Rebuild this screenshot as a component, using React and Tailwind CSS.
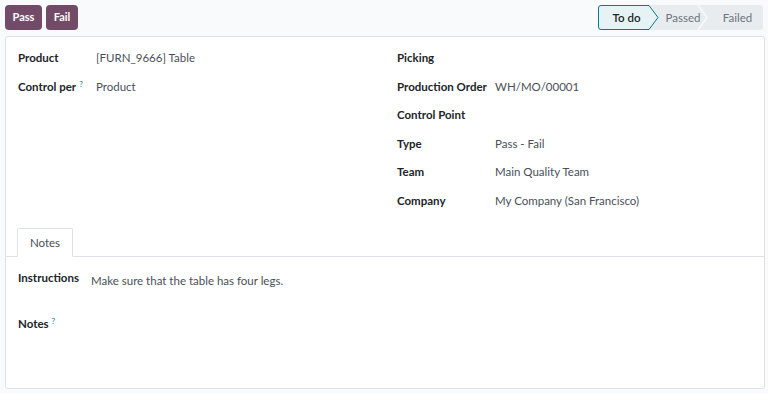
import React from "react";

// --- Quality check form ---

const Field = ({ label, help, value, labelWidth }) => (
  <div className="flex items-start h-[28.5px]">
    <div className={`${labelWidth} shrink-0 whitespace-nowrap font-bold text-[#212529]`}>
      {label}
      {help && <sup className="ml-[3px] text-[8px] font-normal text-[#017e84]">?</sup>}
    </div>
    <div className="text-[#495057]">{value}</div>
  </div>
);

const StatusBar = () => (
  <div className="relative w-[165px] h-[25px]">
    <svg className="absolute inset-0" width="165" height="25" viewBox="0 0 165 25">
      <rect x="0" y="0" width="165" height="25" rx="3" fill="#e9ecef" />
      <path d="M3 0.5 H51 L60 12.5 L51 24.5 H3 Q0.5 24.5 0.5 22 V3 Q0.5 0.5 3 0.5 Z" fill="#e6f2f3" stroke="#017e84" strokeWidth="1" />
      <path d="M100 0 L109 12.5 L100 25" fill="none" stroke="#f8f9fa" strokeWidth="1.5" />
    </svg>
    <div className="relative flex h-full items-center text-[11.5px]">
      <span className="w-[54px] pl-[3px] text-center font-semibold text-[#212529]">To do</span>
      <span className="w-[56px] pl-[6px] text-center text-[#6c757d]">Passed</span>
      <span className="flex-1 pl-[4px] text-center text-[#6c757d]">Failed</span>
    </div>
  </div>
);

export default function App() {
  return (
    <div
      className="w-[768px] h-[393px] bg-[#f9fafb] text-[11.5px] pl-[5px] pt-[5px] flex flex-col"
      style={{ fontFamily: "Lato, sans-serif" }}
    >
      {/* Top bar */}
      <div className="flex items-center justify-between h-[25px] pr-[5px]">
        <div className="flex gap-[4px]">
          <button className="h-[25px] w-[37px] rounded-[4px] bg-[#714b67] text-white font-bold text-[11px]">
            Pass
          </button>
          <button className="h-[25px] w-[32px] rounded-[4px] bg-[#714b67] text-white font-bold text-[11px]">
            Fail
          </button>
        </div>
        <StatusBar />
      </div>

      {/* Form sheet */}
      <div className="mt-[6px] w-[760px] h-[353px] bg-white border border-[#dee2e6] rounded-[3px] flex flex-col">
        <div className="flex px-[12px] pt-[12px] h-[190px]">
          <div className="w-[379px]">
            <Field label="Product" value="[FURN_9666] Table" labelWidth="w-[78px]" />
            <Field label="Control per" help value="Product" labelWidth="w-[78px]" />
          </div>
          <div className="flex-1">
            <Field label="Picking" value="" labelWidth="w-[98px]" />
            <Field label="Production Order" value="WH/MO/00001" labelWidth="w-[98px]" />
            <Field label="Control Point" value="" labelWidth="w-[98px]" />
            <Field label="Type" value="Pass - Fail" labelWidth="w-[98px]" />
            <Field label="Team" value="Main Quality Team" labelWidth="w-[98px]" />
            <Field label="Company" value="My Company (San Francisco)" labelWidth="w-[98px]" />
          </div>
        </div>

        {/* Tabs */}
        <div className="flex border-b border-[#dee2e6] px-[11px] h-[30px] items-end">
          <div className="h-[29px] w-[56px] -mb-px bg-white border border-[#dee2e6] border-b-white rounded-t-[2px] flex items-center justify-center text-[#495057]">
            Notes
          </div>
        </div>

        <div className="px-[12px] pt-[12px]">
          <div className="flex items-start">
            <div className="w-[73px] font-bold text-[#212529]">Instructions</div>
            <div className="text-[#495057] pt-[3px]">Make sure that the table has four legs.</div>
          </div>
          <div className="mt-[26px] font-bold text-[#212529]">
            Notes
            <sup className="ml-[3px] text-[8px] font-normal text-[#017e84]">?</sup>
          </div>
        </div>
      </div>
    </div>
  );
}
